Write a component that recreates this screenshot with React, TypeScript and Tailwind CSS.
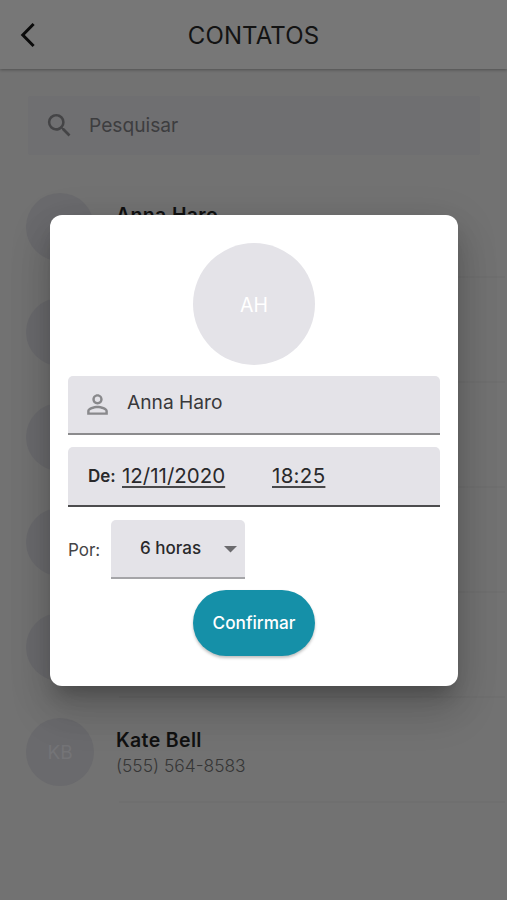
import React from "react";

type Contact = { name?: string; initials?: string; phone?: string };

const contacts: Contact[] = [
  { name: "Anna Haro" },
  {},
  {},
  {},
  {},
  { name: "Kate Bell", initials: "KB", phone: "(555) 564-8583" },
];

function Header() {
  return (
    <header className="relative z-10 flex h-[69px] items-center bg-[#777777] shadow-[0_1px_3px_rgba(0,0,0,0.3)]">
      <div className="flex w-[100px] pt-px pl-[20px]">
        <svg width="16" height="26" viewBox="0 0 16 26" fill="none" stroke="#0a0a0a" strokeWidth="3">
          <path d="M13.6 2 L2.8 13 L13.6 24" />
        </svg>
      </div>
      <h1 className="flex-1 pt-[2px] text-center text-[24px] leading-none tracking-[0.1px] text-[#131313]">CONTATOS</h1>
      <div className="w-[100px]" />
    </header>
  );
}

function SearchBar() {
  return (
    <div className="mr-[27px] ml-[28px] mt-[27px] flex h-[59px] items-center rounded-[3px] bg-[#6f6f71]">
      <svg className="ml-[16px]" width="31" height="31" viewBox="0 0 24 24" fill="#444446">
        <path d="M15.5 14h-.79l-.28-.27A6.471 6.471 0 0 0 16 9.5 6.5 6.5 0 1 0 9.5 16c1.61 0 3.09-.59 4.23-1.57l.27.28v.79l5 4.99L20.49 19l-4.99-5zm-6 0C7.01 14 5 11.99 5 9.5S7.01 5 9.5 5 14 7.01 14 9.5 11.99 14 9.5 14z" />
      </svg>
      <span className="ml-[14px] pb-px text-[19.2px] text-[#3d3d3f]">Pesquisar</span>
    </div>
  );
}

function ContactRow({ name, initials, phone }: Contact) {
  return (
    <li className="flex h-[105px] pr-[2px] pl-[26px]">
      <div className="mt-[20px] flex size-[68px] shrink-0 items-center justify-center rounded-full bg-[#6a6a6d] pt-[2px] text-[19px] text-[#747477]">
        {initials}
      </div>
      <div className="ml-[25px] flex-1 border-b-2 border-[#6f6f6f] pt-[29px]">
        <div className="-ml-[3px] text-[19.5px] leading-[26px] font-semibold tracking-[0.35px] text-[#111111]">{name}</div>
        <div className="-ml-[3px] text-[17.4px] leading-[25px] font-light text-[#363636]">{phone}</div>
      </div>
    </li>
  );
}

function ScheduleDialog() {
  return (
    <section
      role="dialog"
      className="absolute top-[215px] left-[50px] z-20 flex h-[471px] w-[408px] flex-col rounded-[12px] bg-white px-[18px] pt-[28px] shadow-[0_14px_18px_-7px_rgba(0,0,0,0.2),0_26px_40px_3px_rgba(0,0,0,0.12),0_10px_40px_4px_rgba(0,0,0,0.1)]"
    >
      <div className="flex size-[122px] shrink-0 items-center justify-center self-center rounded-full bg-[#e4e3e8] pt-[3px] text-[19.5px] text-white">
        AH
      </div>

      <div className="mt-[11px] flex h-[59px] shrink-0 items-center rounded-t-[5px] border-b-2 border-[#8b8b8d] bg-[#e4e3e8]">
        <svg className="ml-[14px]" width="31" height="31" viewBox="0 0 24 24" fill="#89898c">
          <path d="M12 5.9a2.1 2.1 0 1 1 0 4.2 2.1 2.1 0 0 1 0-4.2m0 9c2.97 0 6.1 1.46 6.1 2.1v1.1H5.9V17c0-.64 3.13-2.1 6.1-2.1M12 4C9.79 4 8 5.79 8 8s1.79 4 4 4 4-1.79 4-4-1.79-4-4-4zm0 9c-2.67 0-8 1.34-8 4v3h16v-3c0-2.66-5.33-4-8-4z" />
        </svg>
        <span className="ml-[14px] pb-[5px] text-[19.2px] text-[#39393b]">Anna Haro</span>
      </div>

      <div className="mt-[12px] flex h-[60px] shrink-0 items-center rounded-t-[5px] border-b-2 border-[#4c4c4e] bg-[#e4e3e8] pt-px pl-[20px] text-[#29292b]">
        <span className="w-[34px] text-[17px] font-semibold">De:</span>
        <span className="w-[150px] text-[20.5px]">
          <span className="underline decoration-[#49494b] decoration-2 underline-offset-[3px]">12/11/2020</span>
        </span>
        <span className="text-[20.5px] tracking-[0.3px]">
          <span className="underline decoration-[#49494b] decoration-2 underline-offset-[3px]">18:25</span>
        </span>
      </div>

      <div className="mt-[13px] flex h-[59px] shrink-0 items-center">
        <span className="w-[43px] pt-[2px] text-[17px] text-[#454547]">Por:</span>
        <div className="flex h-[59px] w-[134px] items-center rounded-t-[5px] border-b-2 border-[#a5a5a8] bg-[#e4e3e8] pt-px pl-[29px] text-[17px] font-medium text-[#29292b]">
          <span className="w-[84px]">6 horas</span>
          <svg width="13" height="7" viewBox="0 0 13 7" fill="#6b6b6e">
            <path d="M0 0h13L6.5 6.5z" />
          </svg>
        </div>
      </div>

      <button className="mt-[11px] h-[66px] w-[122px] shrink-0 self-center rounded-full bg-[#1590a8] text-[17.2px] font-medium text-white shadow-[0_2px_3px_rgba(0,0,0,0.25)]">
        Confirmar
      </button>
    </section>
  );
}

export default function App() {
  return (
    <div className="relative h-[900px] w-[507px] overflow-hidden bg-[#727272] font-['Inter',sans-serif]">
      <Header />
      <SearchBar />
      <ul className="mt-[18px]">
        {contacts.map((contact, index) => (
          <ContactRow key={index} {...contact} />
        ))}
      </ul>
      <ScheduleDialog />
    </div>
  );
}
